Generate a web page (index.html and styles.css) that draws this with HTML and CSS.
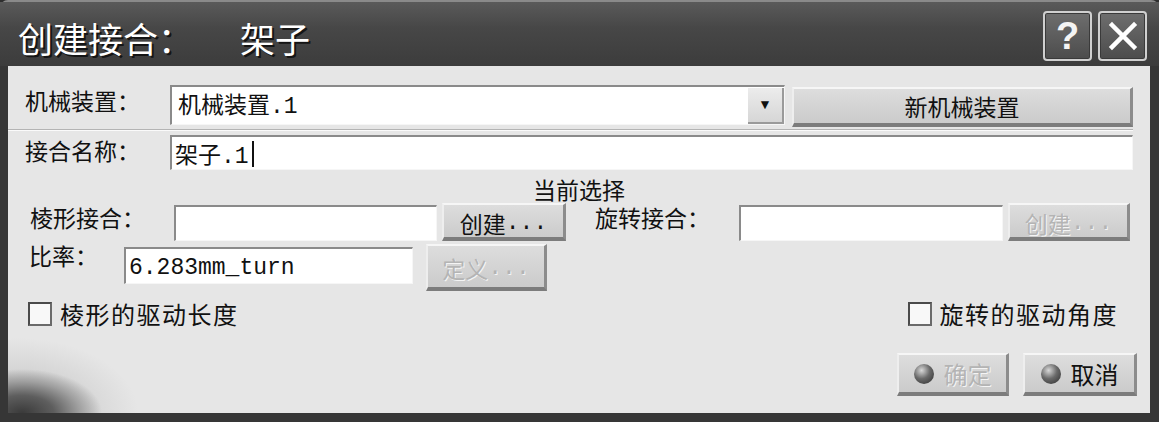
FILE: index.html
```html
<!DOCTYPE html>
<html>
<head>
<meta charset="UTF-8">
<title>创建接合</title>
<link rel="stylesheet" href="styles.css">
</head>
<body>

<div class="dialog">
    <div class="titlebar">
        <div class="title">创建接合：<span class="title-name">架子</span></div>
        <div class="tb-buttons">
            <div class="tb-btn tb-help">?</div>
            <div class="tb-btn">
                <svg width="30" height="30" viewBox="0 0 30 30">
                    <path d="M4 4 L26 26 M26 4 L4 26" stroke="#fff" stroke-width="4.5" stroke-linecap="square"/>
                </svg>
            </div>
        </div>
    </div>

    <div class="client">
        <div class="globe"></div>

        <div class="row row-mech">
            <div class="label w-mech">机械装置：</div>
            <div class="field combo">
                <span class="combo-text">机械装置.1</span>
                <span class="combo-arrow">&#9660;</span>
            </div>
            <div class="btn btn-new">新机械装置</div>
        </div>
        <div class="sep"></div>

        <div class="row row-name">
            <div class="label w-mech">接合名称：</div>
            <div class="field field-name">架子.1<span class="caret"></span></div>
        </div>

        <div class="current">当前选择</div>

        <div class="row row-joint">
            <div class="label w-joint">棱形接合：</div>
            <div class="field field-joint"></div>
            <div class="btn btn-small">创建<span class="dots">...</span></div>
            <div class="label w-joint rot-label">旋转接合：</div>
            <div class="field field-joint2"></div>
            <div class="btn btn-small btn-off btn-rot">创建<span class="dots">...</span></div>
        </div>

        <div class="row row-ratio">
            <div class="label w-ratio">比率：</div>
            <div class="field field-ratio">6.283mm_turn</div>
            <div class="btn btn-small btn-off btn-def">定义<span class="dots">...</span></div>
        </div>

        <div class="row row-check">
            <div class="check"><span class="box"></span>棱形的驱动长度</div>
            <div class="check"><span class="box"></span>旋转的驱动角度</div>
        </div>

        <div class="row row-actions">
            <div class="btn btn-act btn-off"><span class="ball"></span>确定</div>
            <div class="btn btn-act btn-cancel"><span class="ball"></span>取消</div>
        </div>
    </div>
</div>

</body>
</html>
```

FILE: styles.css
```css
* {
    margin: 0;
    padding: 0;
    box-sizing: border-box;
}

html, body {
    width: 1159px;
    height: 422px;
    overflow: hidden;
    background: #2e2e2e;
}

body {
    font-family: "Noto Sans CJK SC", "Noto Sans", sans-serif;
    color: #111;
}

.dialog {
    display: flex;
    flex-direction: column;
    width: 1159px;
    height: 422px;
    border-radius: 8px 8px 0 0;
    border-top: 2px solid #8a8a8a;
    background: #363636;
}

.titlebar {
    display: flex;
    align-items: center;
    justify-content: space-between;
    height: 64px;
    padding: 0 12px 0 18px;
    background: linear-gradient(#5a5a5a, #474747 40%, #3c3c3c);
}

.title {
    margin-top: 6px;
    font-size: 35px;
    line-height: 1;
    color: #fff;
    text-shadow: 2px 2px 0 #151515;
}

.title-name {
    margin-left: 47px;
}

.tb-buttons {
    display: flex;
    gap: 6px;
    margin-top: 4px;
}

.tb-btn {
    display: flex;
    align-items: center;
    justify-content: center;
    width: 49px;
    height: 50px;
    border: 2px solid #d0d0d0;
    border-radius: 4px;
    background: linear-gradient(#6e6e6e, #4c4c4c);
    box-shadow: inset 0 0 0 1px #3a3a3a;
}

.tb-help {
    font-family: "Liberation Sans", sans-serif;
    font-size: 38px;
    font-weight: bold;
    color: #f4f4f4;
}

.client {
    position: relative;
    flex: 1;
    margin: 0 9px 9px 8px;
    padding: 0 17px;
    background: #e6e6e6;
    overflow: hidden;
}

.globe {
    position: absolute;
    left: 0;
    bottom: 0;
    width: 130px;
    height: 80px;
    background:
        radial-gradient(ellipse 80px 44px at 14px 80px, #3a3a3a 0%, #5e5e5e 40%, #a0a0a0 72%, rgba(230,230,230,0) 100%),
        radial-gradient(ellipse 120px 75px at 10px 80px, rgba(160,160,160,0.55), rgba(230,230,230,0) 100%);
}

.row {
    position: relative;
    display: flex;
    align-items: flex-start;
}

.label {
    flex: none;
    font-size: 23px;
    line-height: 1;
    white-space: nowrap;
}

.field {
    flex: none;
    background: #fff;
    border-top: 2px solid #8a8a8a;
    border-left: 2px solid #8a8a8a;
    border-bottom: 1px solid #f6f6f6;
    border-right: 1px solid #f6f6f6;
    font-family: "Liberation Mono", "Noto Sans CJK SC", monospace;
    font-size: 23px;
    line-height: 1;
    white-space: nowrap;
}

.btn {
    display: flex;
    align-items: center;
    justify-content: center;
    flex: none;
    background: linear-gradient(#dddddd, #cbcbcb);
    border-top: 2px solid #f6f6f6;
    border-left: 2px solid #eeeeee;
    border-right: 3px solid #8c8c8c;
    border-bottom: 4px solid #7c7c7c;
    font-size: 23px;
    line-height: 1;
    white-space: nowrap;
}

.dots {
    font-family: "Liberation Mono", monospace;
}

.btn-off {
    color: #b4b4b4;
    text-shadow: 1px 1px 0 #f4f4f4;
}

/* row 1 */
.row-mech {
    margin-top: 19px;
    height: 42px;
}

.w-mech {
    width: 145px;
    padding: 4px 0 0 0;
}

.combo {
    display: flex;
    align-items: center;
    justify-content: space-between;
    width: 615px;
    height: 40px;
    padding-left: 6px;
}

.combo-text {
    margin-top: 4px;
}

.combo-arrow {
    display: flex;
    align-items: center;
    justify-content: center;
    width: 36px;
    height: 36px;
    background: linear-gradient(#ececec, #d6d6d6);
    border-right: 2px solid #9a9a9a;
    border-bottom: 2px solid #9a9a9a;
    font-size: 14px;
    color: #111;
}

.btn-new {
    margin: 2px 0 0 7px;
    width: 341px;
    height: 40px;
}

.sep {
    height: 2px;
    margin: 2px 0 0 -17px;
    border-top: 1px solid #b4b4b4;
    border-bottom: 1px solid #fafafa;
}

/* row 2 */
.row-name {
    margin-top: 4px;
}

.field-name {
    width: 963px;
    height: 35px;
    padding: 4px 0 0 3px;
}

.caret {
    display: inline-block;
    width: 2px;
    height: 26px;
    margin-left: 3px;
    vertical-align: -4px;
    background: #111;
}

.current {
    margin-top: 8px;
    height: 25px;
    text-align: center;
    font-size: 23px;
    line-height: 1;
}

/* row 3 */
.row-joint {
    margin-left: 5px;
}

.w-joint {
    width: 144px;
    padding-top: 3px;
}

.field-joint {
    width: 263px;
    height: 36px;
    margin-top: 2px;
}

.field-joint2 {
    width: 264px;
    height: 36px;
    margin-top: 2px;
}

.btn-small {
    margin-left: 5px;
    width: 124px;
    height: 38px;
    padding-top: 4px;
}

.rot-label {
    margin-left: 29px;
}

.btn-rot {
    width: 122px;
}

/* row 4 */
.row-ratio {
    margin-top: 3px;
    margin-left: 4px;
}

.w-ratio {
    width: 95px;
    padding-top: 0;
}

.field-ratio {
    width: 289px;
    height: 37px;
    margin-top: 3px;
    padding: 8px 0 0 3px;
}

.btn-def {
    margin-left: 13px;
    width: 121px;
    height: 47px;
}

/* row 5 */
.row-check {
    justify-content: space-between;
    margin: 11px 15px 0 3px;
}

.check {
    display: flex;
    align-items: center;
    font-size: 24px;
    letter-spacing: 1.5px;
    line-height: 1;
}

.box {
    width: 24px;
    height: 24px;
    margin-right: 8px;
    background: #f8f8f8;
    border: 2px solid #4a4a4a;
    border-right-color: #6a6a6a;
    border-bottom-color: #6a6a6a;
}

/* row 6 */
.row-actions {
    justify-content: flex-end;
    margin: 27px -4px 0 0;
}

.btn-act {
    width: 112px;
    height: 43px;
    gap: 10px;
    font-size: 24px;
}

.btn-cancel {
    margin-left: 14px;
    width: 114px;
}

.ball {
    width: 20px;
    height: 20px;
    border-radius: 50%;
    background: radial-gradient(circle at 38% 32%, #d8d8d8 0%, #6a6a6a 45%, #2a2a2a 100%);
}
```
